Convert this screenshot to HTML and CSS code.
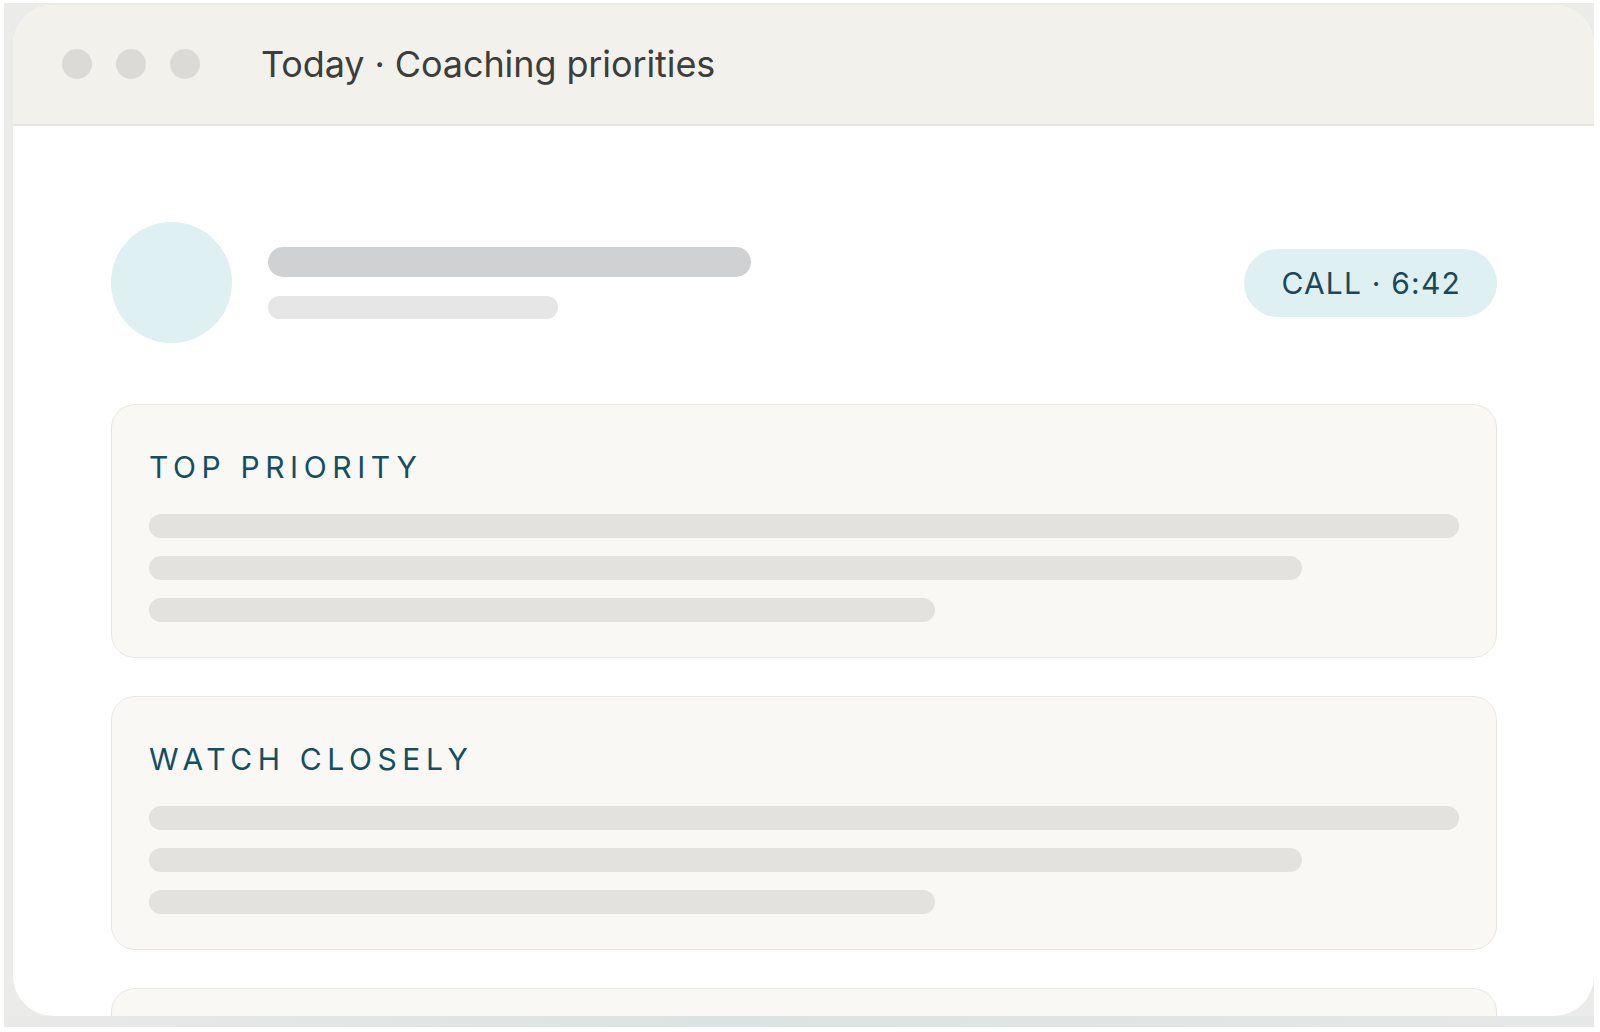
FILE: index.html
```html
<!DOCTYPE html>
<html lang="en">
<head>
    <meta charset="UTF-8">
    <meta name="viewport" content="width=device-width, initial-scale=1.0">
    <title>Today · Coaching priorities</title>
    <link rel="stylesheet" href="styles.css">
</head>
<body>
    <div class="frame">
        <div class="window">
            <div class="titlebar">
                <div class="lights">
                    <span class="light"></span>
                    <span class="light"></span>
                    <span class="light"></span>
                </div>
                <div class="title">Today · Coaching priorities</div>
            </div>

            <div class="content">
                <div class="rep-header">
                    <div class="avatar"></div>
                    <div class="rep-info">
                        <div class="skeleton name"></div>
                        <div class="skeleton role"></div>
                    </div>
                    <div class="call-pill">CALL · 6:42</div>
                </div>

                <div class="priority-card">
                    <div class="card-label">TOP PRIORITY</div>
                    <div class="card-lines">
                        <div class="skeleton line full"></div>
                        <div class="skeleton line long"></div>
                        <div class="skeleton line short"></div>
                    </div>
                </div>

                <div class="priority-card">
                    <div class="card-label">WATCH CLOSELY</div>
                    <div class="card-lines">
                        <div class="skeleton line full"></div>
                        <div class="skeleton line long"></div>
                        <div class="skeleton line short"></div>
                    </div>
                </div>

                <!-- next card peeks in below the fold -->
                <div class="priority-card"></div>
            </div>
        </div>
    </div>
</body>
</html>
```

FILE: styles.css
```css
* {
    margin: 0;
    padding: 0;
    box-sizing: border-box;
}

body {
    font-family: Inter, 'Noto Sans', sans-serif;
    background: #fff;
    width: 1600px;
    height: 1032px;
    overflow: hidden;
}

.frame {
    margin: 3px 0 0 4px;
    width: 1590px;
    height: 1024px;
    padding: 2px 0 11px 9px;
    background: linear-gradient(90deg, #e9e9e8 0%, #dae3e3 45%, #e6e8e7 100%) bottom / 100% 11px no-repeat, #ebebe9;
}

.window {
    height: 100%;
    background: #fff;
    border-radius: 40px;
    overflow: hidden;
    display: flex;
    flex-direction: column;
}

.titlebar {
    height: 121px;
    flex-shrink: 0;
    background: #f3f1ec;
    border-bottom: 2px solid #e6e4df;
    display: flex;
    align-items: center;
    padding: 0 0 2px 49px;
}

.lights {
    display: flex;
    gap: 24px;
}

.light {
    width: 30px;
    height: 30px;
    border-radius: 50%;
    background: #dcdad6;
}

.title {
    margin-left: 61px;
    font-size: 36px;
    font-weight: 400;
    letter-spacing: -0.1px;
    color: #3d3d3b;
}

.content {
    padding: 96px 97px 0 98px;
}

.rep-header {
    display: flex;
    align-items: center;
    gap: 36px;
    margin-bottom: 61px;
}

.avatar {
    width: 121px;
    height: 121px;
    border-radius: 50%;
    background: #dff0f2;
    flex-shrink: 0;
}

.rep-info {
    flex: 1;
    display: flex;
    flex-direction: column;
    gap: 19px;
}

.skeleton {
    border-radius: 999px;
    background: #e3e2df;
}

.skeleton.name {
    width: 483px;
    height: 30px;
    background: #d0d1d2;
}

.skeleton.role {
    width: 290px;
    height: 23px;
    background: #e6e6e6;
}

.call-pill {
    background: #dff0f2;
    color: #1b4858;
    font-size: 30px;
    font-weight: 400;
    letter-spacing: 1.2px;
    height: 68px;
    padding: 0 36px 0 37px;
    border-radius: 34px;
    display: flex;
    align-items: center;
}

.priority-card {
    background: #f9f8f5;
    border: 1px solid #e8e7e3;
    border-radius: 24px;
    padding: 44px 37px 36px;
    margin-bottom: 38px;
    height: 254px;
}

.card-label {
    font-size: 30px;
    font-weight: 400;
    letter-spacing: 5.6px;
    color: #134f62;
    line-height: 36px;
    margin-bottom: 29px;
}

.card-lines {
    display: flex;
    flex-direction: column;
    gap: 18px;
}

.skeleton.line {
    height: 24px;
}

.skeleton.long {
    width: 88%;
}

.skeleton.short {
    width: 60%;
}
```
